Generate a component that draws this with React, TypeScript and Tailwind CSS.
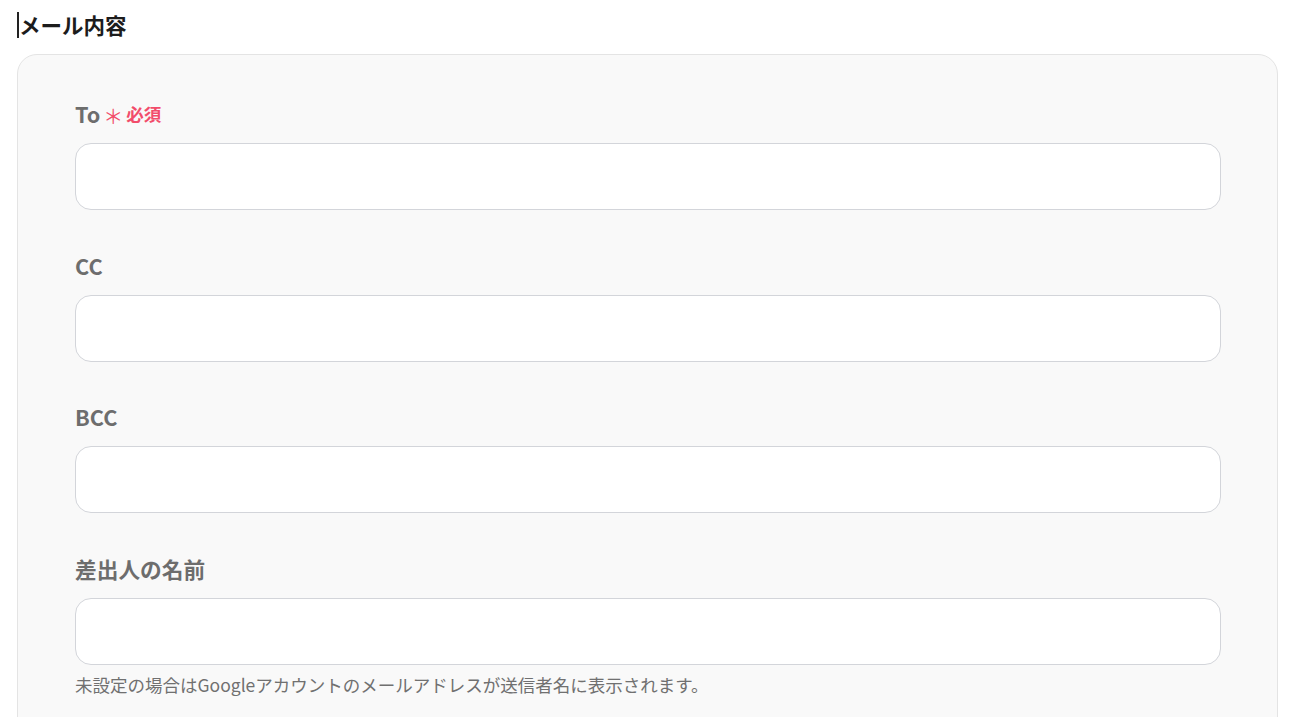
import React from 'react';

interface FieldProps {
  label: string;
  required?: boolean;
  help?: string;
}

const Field = ({ label, required = false, help }: FieldProps) => {
  return (
    <div className="flex flex-col">
      <div className="flex items-center h-[28px] mb-[15px]">
        <span className="text-[21.7px] font-bold text-[#6d6d6d] leading-[28px]">{label}</span>
        {required && (
          <span className="ml-[3px] flex items-center text-[#f24d6b] font-bold">
            <span className="text-[20px] font-normal leading-none mt-[3px]">＊</span>
            <span className="ml-[3px] text-[17.5px] leading-none">必須</span>
          </span>
        )}
      </div>
      <input
        type="text"
        className="h-[67px] w-full rounded-[16px] border border-[#d3d5da] bg-white px-4 outline-none"
      />
      {help && (
        <p className="mt-[8px] text-[17.5px] leading-[24px] text-[#707070]">{help}</p>
      )}
    </div>
  );
};

export default function App() {
  // form fields shown in the card
  const fields: FieldProps[] = [
    { label: 'To', required: true },
    { label: 'CC' },
    { label: 'BCC' },
    { label: '差出人の名前', help: '未設定の場合はGoogleアカウントのメールアドレスが送信者名に表示されます。' },
  ];

  return (
    <div
      className="min-h-[717px] w-full bg-white pl-[17px] pr-[24px] pt-[10px]"
      style={{ fontFamily: '"Noto Sans CJK JP", "Noto Sans", sans-serif' }}
    >
      <div className="flex items-center h-[30px]">
        <span className="inline-block w-[2px] h-[26px] bg-[#222]" />
        <h2 className="text-[21.5px] font-bold text-[#1c1c1c] leading-[30px]">メール内容</h2>
      </div>
      <div className="mt-[14px] rounded-[20px] border border-[#e4e4e4] bg-[#f9f9f9] pl-[57px] pr-[56px] pt-[45px] pb-[40px]">
        <div className="flex flex-col gap-[41.5px]">
          {fields.map((f) => (
            <Field key={f.label} {...f} />
          ))}
        </div>
      </div>
    </div>
  );
}
